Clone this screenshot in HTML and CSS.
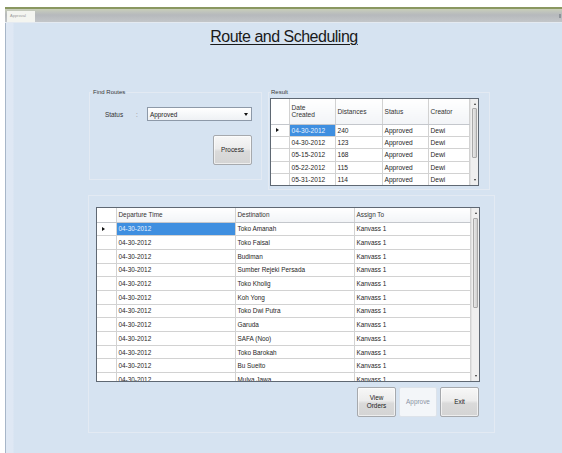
FILE: index.html
```html
<!DOCTYPE html>
<html lang="id">
<head>
<meta charset="utf-8">
<title>Approval</title>
<link rel="stylesheet" href="styles.css">
</head>
<body>
<div class="window">
  <div class="tabbar">
    <div class="tab">Approval</div>
    <span class="tabbar-close"></span>
  </div>
  <div class="form">
    <h1 class="title">Route and Scheduling</h1>

    <div class="top-row">
      <div class="group find">
        <span class="group-label">Find Routes</span>
        <div class="status-row">
          <span class="field-label">Status</span>
          <span class="colon">:</span>
          <div class="combo"><span>Approved</span><span class="combo-arrow"></span></div>
        </div>
        <button class="btn process">Process</button>
      </div>

      <div class="group result">
        <span class="group-label">Result</span>
        <div class="grid result-grid">
          <div class="grid-body">
            <table>
              <colgroup><col class="c-rh-s"><col class="c-46"><col class="c-47"><col class="c-46"><col></colgroup>
              <thead>
                <tr><th class="rh"></th><th>Date<br>Created</th><th>Distances</th><th>Status</th><th>Creator</th></tr>
              </thead>
              <tbody>
                <tr><td class="rh"><span class="cur"></span></td><td class="sel">04-30-2012</td><td>240</td><td>Approved</td><td>Dewi</td></tr>
                <tr><td class="rh"></td><td>04-30-2012</td><td>123</td><td>Approved</td><td>Dewi</td></tr>
                <tr><td class="rh"></td><td>05-15-2012</td><td>168</td><td>Approved</td><td>Dewi</td></tr>
                <tr><td class="rh"></td><td>05-22-2012</td><td>115</td><td>Approved</td><td>Dewi</td></tr>
                <tr><td class="rh"></td><td>05-31-2012</td><td>114</td><td>Approved</td><td>Dewi</td></tr>
              </tbody>
            </table>
          </div>
          <div class="vscroll small">
            <span class="arrow up"></span>
            <span class="thumb"></span>
            <span class="arrow down"></span>
          </div>
        </div>
      </div>
    </div>

    <div class="group main">
      <div class="grid main-grid">
        <div class="grid-body">
          <table>
            <colgroup><col class="c-rh"><col class="c-119"><col class="c-119"><col></colgroup>
            <thead>
              <tr><th class="rh"></th><th>Departure Time</th><th>Destination</th><th>Assign To</th></tr>
            </thead>
            <tbody>
              <tr><td class="rh"><span class="cur"></span></td><td class="sel">04-30-2012</td><td>Toko Amanah</td><td>Kanvass 1</td></tr>
              <tr><td class="rh"></td><td>04-30-2012</td><td>Toko Faisal</td><td>Kanvass 1</td></tr>
              <tr><td class="rh"></td><td>04-30-2012</td><td>Budiman</td><td>Kanvass 1</td></tr>
              <tr><td class="rh"></td><td>04-30-2012</td><td>Sumber Rejeki Persada</td><td>Kanvass 1</td></tr>
              <tr><td class="rh"></td><td>04-30-2012</td><td>Toko Kholig</td><td>Kanvass 1</td></tr>
              <tr><td class="rh"></td><td>04-30-2012</td><td>Koh Yong</td><td>Kanvass 1</td></tr>
              <tr><td class="rh"></td><td>04-30-2012</td><td>Toko Dwi Putra</td><td>Kanvass 1</td></tr>
              <tr><td class="rh"></td><td>04-30-2012</td><td>Garuda</td><td>Kanvass 1</td></tr>
              <tr><td class="rh"></td><td>04-30-2012</td><td>SAFA (Noo)</td><td>Kanvass 1</td></tr>
              <tr><td class="rh"></td><td>04-30-2012</td><td>Toko Barokah</td><td>Kanvass 1</td></tr>
              <tr><td class="rh"></td><td>04-30-2012</td><td>Bu Sueito</td><td>Kanvass 1</td></tr>
              <tr><td class="rh"></td><td>04-30-2012</td><td>Mulya Jawa</td><td>Kanvass 1</td></tr>
            </tbody>
          </table>
        </div>
        <div class="vscroll big">
          <span class="arrow up"></span>
          <span class="thumb"></span>
          <span class="arrow down"></span>
        </div>
      </div>
      <div class="actions">
        <button class="btn action">View<br>Orders</button>
        <button class="btn action disabled" disabled>Approve</button>
        <button class="btn action">Exit</button>
      </div>
    </div>
  </div>
</div>
</body>
</html>
```

FILE: styles.css
```css
html, body {
  margin: 0;
  padding: 0;
  background: #ffffff;
}

body {
  font-family: "Liberation Sans", Arial, sans-serif;
  color: #1e1e1e;
}

.window {
  margin: 7px 0 0 5px;
  width: 557px;
}

/* tab strip across the top of the window */
.tabbar {
  position: relative;
  display: flex;
  height: 13px;
  border-top: 2px solid #8a9760;
  border-bottom: 1px solid #e4eaf1;
  background: linear-gradient(#c9cfb9 0, #bfc3bd 3px, #b6b9bc 6px, #c3c6c9 100%);
}

.tab {
  margin: 2px 0 0 2px;
  width: 28px;
  height: 11px;
  background: #f4f5f0;
  color: #9a9a9a;
  font-size: 4px;
  line-height: 9px;
  padding-left: 3px;
  box-sizing: border-box;
}

.tabbar-close {
  position: absolute;
  right: 1px;
  top: 5px;
  width: 2px;
  height: 4px;
  background: #8f949a;
}

/* form surface */
.form {
  height: 430px;
  box-sizing: border-box;
  border-left: 1px solid #a7b6c8;
  background: linear-gradient(to right, #dfe8f4 0, #dfe8f4 7px, #d6e3f1 8px, #d6e3f1 100%);
}

.title {
  margin: 0;
  padding-top: 5px;
  font-size: 16px;
  line-height: 18px;
  font-weight: normal;
  letter-spacing: -0.5px;
  text-align: center;
  text-decoration: underline;
  text-decoration-thickness: 1px;
  text-underline-offset: 2px;
  color: #1a1a1a;
}

.top-row {
  display: flex;
  align-items: flex-start;
  gap: 6px;
  margin: 46px 0 0 83px;
}

/* group boxes */
.group {
  border: 1px solid #e3eaf3;
  box-sizing: border-box;
}

.group-label {
  display: block;
  width: fit-content;
  margin: -5px 0 0 2px;
  padding: 0 1px;
  font-size: 6px;
  line-height: 8px;
  color: #3a3a3a;
  background: #d6e3f1;
}

.find {
  width: 173px;
  height: 88px;
}

.status-row {
  display: flex;
  align-items: center;
  margin-top: 11px;
  padding-left: 15px;
  font-size: 6.4px;
}

.field-label {
  width: 31px;
  color: #333;
}

.colon {
  width: 11px;
  color: #888;
}

.combo {
  display: flex;
  align-items: center;
  justify-content: space-between;
  width: 105px;
  height: 14px;
  box-sizing: border-box;
  padding: 0 3px 0 2px;
  background: linear-gradient(#ffffff, #eef1f4);
  border: 1px solid #8d99a8;
  font-size: 6.4px;
  color: #222;
}

.combo-arrow {
  width: 0;
  height: 0;
  border-left: 2px solid transparent;
  border-right: 2px solid transparent;
  border-top: 3px solid #111;
}

.btn {
  font-family: "Liberation Sans", Arial, sans-serif;
  font-size: 6.4px;
  line-height: 8px;
  color: #222;
  padding: 0;
  border: 1px solid #a6a9ad;
  border-radius: 2px;
  background: linear-gradient(#f7f7f7 0, #ececec 45%, #dadada 55%, #d4d4d4 100%);
  box-shadow: inset 0 0 0 1px rgba(255, 255, 255, 0.6);
}

.process {
  display: block;
  margin: 14px 0 0 123px;
  width: 39px;
  height: 30px;
}

.result {
  width: 222px;
  height: 98px;
}

.result .group-label {
  margin-left: 1px;
}

/* data grids */
.grid {
  display: flex;
  background: #ffffff;
  border: 1px solid #5f6873;
  box-sizing: border-box;
  overflow: hidden;
}

.grid-body {
  flex: 1;
  overflow: hidden;
}

.grid table {
  width: 100%;
  border-collapse: collapse;
  table-layout: fixed;
}

.grid th,
.grid td {
  border: 1px solid #d2d2d2;
  padding: 0 0 0 2px;
  font-size: 6.4px;
  font-weight: normal;
  text-align: left;
  white-space: nowrap;
  overflow: hidden;
  color: #262626;
}

.grid th {
  background: linear-gradient(#ffffff, #f2f4f7);
  border-bottom-color: #c4c7cc;
  color: #333;
}

.grid tr > :first-child {
  border-left: none;
}

.grid thead th {
  border-top: none;
}

.grid .rh {
  padding: 0;
  background: #ffffff;
  position: relative;
}

.cur {
  display: block;
  margin-left: 5px;
  width: 0;
  height: 0;
  border-top: 2px solid transparent;
  border-bottom: 2px solid transparent;
  border-left: 3px solid #111;
}

.grid td.sel {
  background: #3f8fe0;
  color: #e8f2ff;
}

.result-grid {
  width: 209px;
  height: 88px;
  margin: 2px 0 0 1px;
}

.result-grid thead tr { height: 25px; }
.result-grid tbody tr { height: 12.4px; }
.result-grid th,
.result-grid td { font-size: 6.6px; line-height: 7px; }

.c-rh-s { width: 18px; }
.c-46 { width: 46px; }
.c-47 { width: 47px; }

.main {
  width: 407px;
  height: 238px;
  margin: 5px 0 0 82px;
  padding: 11px 0 0 7px;
}

.main-grid {
  width: 384px;
  height: 175px;
}

.main-grid thead tr { height: 14px; }
.main-grid tbody tr { height: 13.7px; }

.c-rh { width: 19px; }
.c-119 { width: 119px; }

/* vertical scroll bars */
.vscroll {
  display: flex;
  flex-direction: column;
  align-items: center;
  width: 7px;
  flex: none;
  background: #efefef;
  border-left: 1px solid #e2e2e2;
}

.arrow {
  flex: none;
  width: 0;
  height: 0;
  border-left: 1.5px solid transparent;
  border-right: 1.5px solid transparent;
}

.arrow.up {
  margin-top: 4px;
  border-bottom: 2px solid #333;
}

.arrow.down {
  margin-top: auto;
  margin-bottom: 4px;
  border-top: 2px solid #333;
}

.thumb {
  width: 5px;
  box-sizing: border-box;
  border: 1px solid #a9a9a9;
  border-radius: 1px;
  background: linear-gradient(to right, #e8e8e8, #cfcfcf);
}

.small .thumb {
  margin-top: 3px;
  height: 50px;
}

.big .thumb {
  margin-top: 4px;
  height: 90px;
}

.actions {
  display: flex;
  justify-content: flex-end;
  gap: 3px;
  width: 384px;
  padding-right: 1px;
  box-sizing: border-box;
  margin-top: 5px;
}

.action {
  width: 39px;
  height: 30px;
}

.action.disabled {
  width: 38px;
  background: #f3f6f9;
  border-color: #dde3ea;
  box-shadow: none;
  color: #8a93a3;
}
```
